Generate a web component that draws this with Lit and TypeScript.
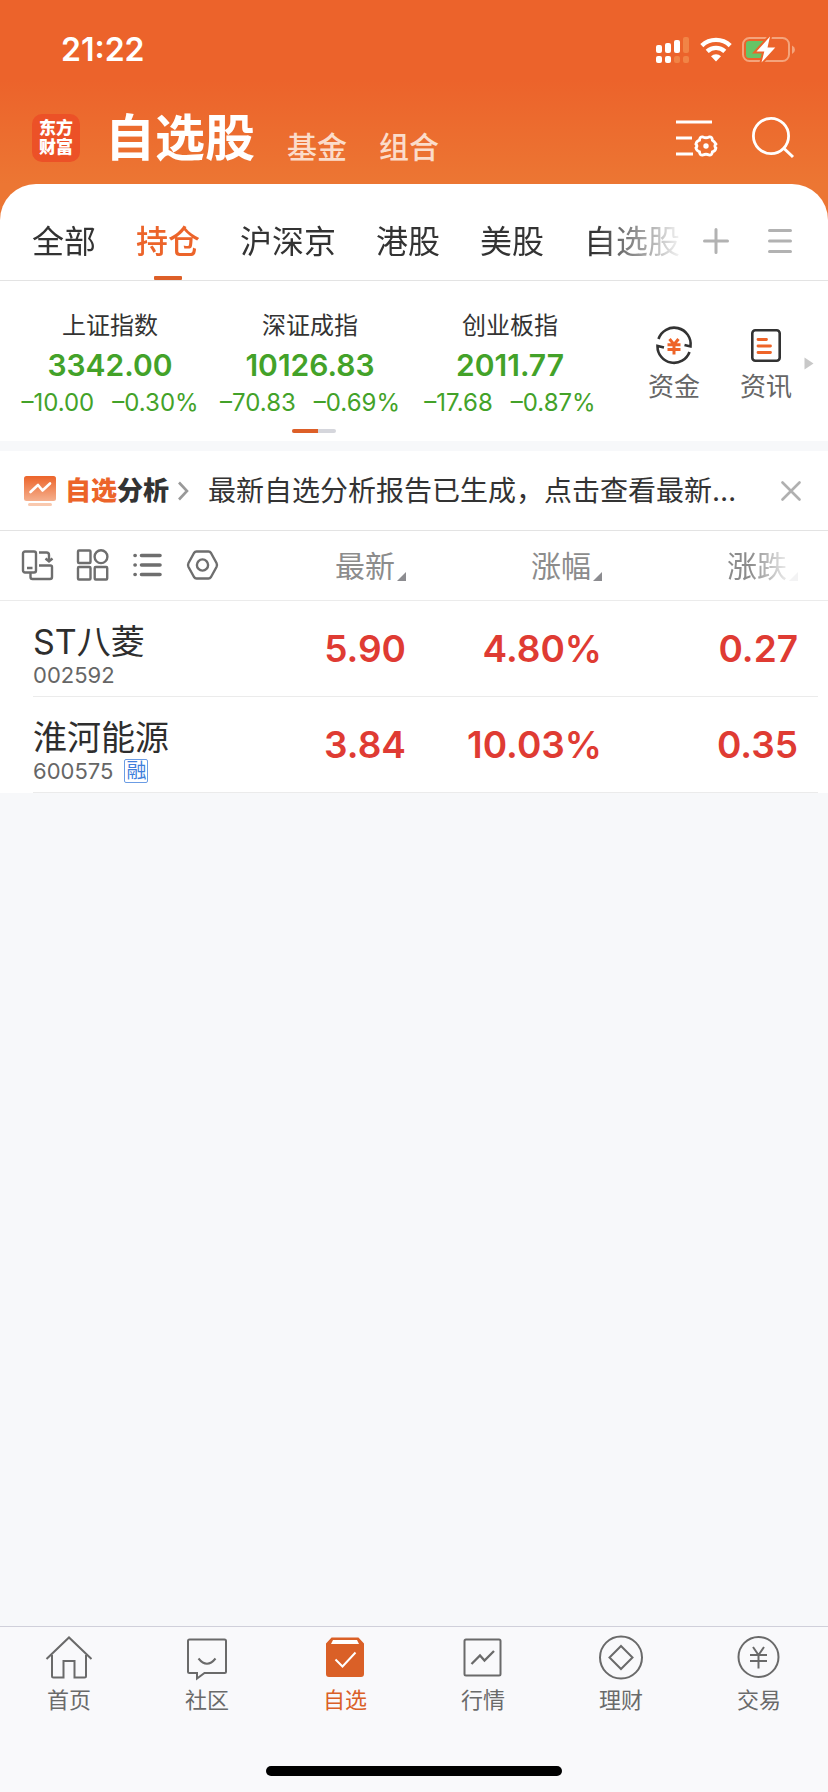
import { LitElement, html, css, svg } from "lit";
import { customElement, property, state } from "lit/decorators.js";
import { classMap } from "lit/directives/class-map.js";

const reset = css`
  :host, * { box-sizing: border-box; }
  button {
    appearance: none;
    border: 0;
    padding: 0;
    margin: 0;
    background: none;
    font: inherit;
    color: inherit;
    cursor: pointer;
  }
  a { color: inherit; text-decoration: none; }
  svg { display: block; flex: none; fill: none; }
  h1, p { margin: 0; }
`;

@customElement("status-bar")
class StatusBar extends LitElement {
  static styles = [reset, css`
    :host {
      display: flex;
      justify-content: space-between;
      align-items: center;
      height: 100px;
      padding: 0 32px 0 61px;
      color: #fff;
    }
    .time { font-size: 32px; line-height: 40px; font-weight: 600; }
    .icons { display: flex; align-items: center; gap: 10px; }
  `];

  render() {
    return html`
      <time class="time">21:22</time>
      <div class="icons">
        <svg width="34" height="28" viewBox="0 0 34 28" aria-label="信号">
          <rect x="0" y="9" width="6" height="8" rx="2" fill="#fff"/>
          <rect x="9" y="7" width="6" height="10" rx="2" fill="#fff"/>
          <rect x="18" y="4" width="6" height="13" rx="2" fill="#fff"/>
          <rect x="27" y="1" width="6" height="16" rx="2" fill="#f18446"/>
          <rect x="0" y="20" width="6" height="7" rx="2" fill="#fff"/>
          <rect x="9" y="20" width="6" height="7" rx="2" fill="#fff"/>
          <rect x="18" y="20" width="6" height="7" rx="2" fill="#f18446"/>
          <rect x="27" y="20" width="6" height="7" rx="2" fill="#f18446"/>
        </svg>
        <svg width="32" height="26" viewBox="0 0 32 26" aria-label="无线网络">
          <path d="M1.800 8.600A20.600 20.600 0 0 1 30.200 8.600" stroke="#fff" stroke-width="4.400"/>
          <path d="M7.200 14.400A12.800 12.800 0 0 1 24.800 14.400" stroke="#fff" stroke-width="4.400"/>
          <path d="M11 19.200A7.400 7.400 0 0 1 21 19.200L16 24.400Z" fill="#fff"/>
        </svg>
        <svg width="54" height="28" viewBox="0 0 54 28" aria-label="电池充电中">
          <rect x="1" y="2" width="46" height="23" rx="6.500" stroke="#f4a47c" stroke-width="2"/>
          <path d="M50 9.500Q53 11 53 13.700Q53 16.500 50 18Z" fill="#f4a47c"/>
          <path d="M7 5H21V22H7Q4 22 4 19V8Q4 5 7 5Z" fill="#67c466"/>
          <path d="M28 0.500L14.500 15.500H22.300L19.500 26.500L33.300 11.500H25.500Z" fill="#fff" stroke="#ec642b" stroke-width="4" paint-order="stroke"/>
        </svg>
      </div>
    `;
  }
}

@customElement("app-header")
class AppHeader extends LitElement {
  static styles = [reset, css`
    :host {
      display: flex;
      align-items: center;
      height: 84px;
      padding: 0 33px 8px 32px;
      color: #fff;
    }
    .logo {
      display: grid;
      place-content: center;
      width: 48px;
      height: 48px;
      border-radius: 10px;
      background: #ec5127;
      font-size: 17px;
      line-height: 19px;
      font-weight: 900;
      text-align: center;
    }
    .titles { display: flex; align-items: flex-end; flex: 1; margin-left: 25px; }
    h1 { font-size: 50px; line-height: 60px; font-weight: 700; }
    .link { font-size: 30px; line-height: 42px; font-weight: 500; color: #fbdcca; margin-left: 32px; }
    .actions { display: flex; align-items: center; gap: 34px; }
  `];

  render() {
    return html`
      <a class="logo" href="#home"><span>东方</span><span>财富</span></a>
      <div class="titles">
        <h1>自选股</h1>
        <a class="link" href="#fund">基金</a>
        <a class="link" href="#portfolio">组合</a>
      </div>
      <div class="actions">
        <button aria-label="管理">
          <svg width="43" height="42" viewBox="0 0 43 42" stroke="#fff">
            <path d="M1 5H37M1 21H17M1 37H18" stroke-width="3"/>
            <path d="M27.900 20Q31 21.500 34.100 20Q37.200 19.500 37.400 23.200Q39.200 24.200 40.900 27Q38.900 29 40.900 31Q40.500 34 37.400 34.800Q36.900 38.500 34.100 38Q31 36.500 27.900 38Q24.700 38.500 24.500 34.800Q21.700 34 20.900 31Q22.900 29 20.900 27Q21.700 24 24.500 23.200Q24.700 19.500 27.900 20Z" stroke-width="2.800"/>
            <circle cx="31" cy="29" r="2.700" fill="#fff" stroke="none"/>
          </svg>
        </button>
        <button aria-label="搜索">
          <svg width="43" height="42" viewBox="0 0 43 42" stroke="#fff" stroke-width="2.800">
            <circle cx="19" cy="19" r="17.600"/>
            <path d="M31.500 31L41 40" stroke-width="3"/>
          </svg>
        </button>
      </div>
    `;
  }
}

@customElement("group-tabs")
class GroupTabs extends LitElement {
  static styles = [reset, css`
    :host {
      display: flex;
      align-items: stretch;
      height: 97px;
      border-bottom: 1px solid #e3e3e3;
      padding-right: 36px;
      color: #333;
    }
    .strip {
      display: flex;
      gap: 40px;
      flex: 1;
      min-width: 0;
      padding-left: 32px;
      -webkit-mask-image: linear-gradient(to left, transparent 0, #000 90px);
      mask-image: linear-gradient(to left, transparent 0, #000 90px);
    }
    .tab {
      position: relative;
      flex: none;
      height: 96px;
      padding-bottom: 14px;
      padding-top: 34px;
      font-size: 32px;
      line-height: 48px;
      white-space: nowrap;
    }
    .active { color: #ec642a; font-weight: 500; }
    .active::after {
      content: "";
      position: absolute;
      left: 50%;
      bottom: 0;
      width: 28px;
      height: 4px;
      margin-left: -14px;
      border-radius: 1px;
      background: #dd5f28;
    }
    .tools { display: flex; align-items: center; gap: 39px; padding: 18px 0 0 18px; }
  `];

  @state() private current = "持仓";

  render() {
    return html`
      <nav class="strip">
        ${["全部", "持仓", "沪深京", "港股", "美股", "自选股"].map((name) => html`
          <button class=${classMap({ tab: true, active: name === this.current })}
            @click=${() => { this.current = name; }}>${name}</button>`)}
      </nav>
      <div class="tools">
        <button aria-label="添加分组">
          <svg width="26" height="26" viewBox="0 0 26 26" stroke="#b2b2b2" stroke-width="3" stroke-linecap="round">
            <path d="M13 1.500V24.500M1.500 13H24.500"/>
          </svg>
        </button>
        <button aria-label="分组列表">
          <svg width="24" height="26" viewBox="0 0 24 26" stroke="#b2b2b2" stroke-width="3" stroke-linecap="round">
            <path d="M1.500 2.500H22.500M1.500 13H22.500M1.500 23.500H22.500"/>
          </svg>
        </button>
      </div>
    `;
  }
}

interface Quote { name: string; value: string; change: string; percent: string; }

const QUOTES: Quote[] = [
  { name: "上证指数", value: "3342.00", change: "–10.00", percent: "–0.30%" },
  { name: "深证成指", value: "10126.83", change: "–70.83", percent: "–0.69%" },
  { name: "创业板指", value: "2011.77", change: "–17.68", percent: "–0.87%" },
];

@customElement("index-panel")
class IndexPanel extends LitElement {
  static styles = [reset, css`
    :host {
      display: flex;
      gap: 10px;
      height: 160px;
      padding: 0 14px 0 10px;
      color: #333;
    }
    .pager { flex: 1; display: flex; flex-direction: column; align-items: center; }
    .quotes { display: grid; grid-template-columns: repeat(3, 1fr); width: 100%; padding: 27px 8px 0 0; }
    .quote { display: flex; flex-direction: column; align-items: center; white-space: nowrap; }
    .name { font-size: 24px; line-height: 36px; }
    .value { font-size: 30px; line-height: 42px; font-weight: 600; color: #43a229; }
    .moves { display: flex; gap: 18px; font-size: 24px; line-height: 34px; color: #43a229; }
    .dots { display: flex; width: 44px; height: 4px; margin-top: 9px; border-radius: 2px; overflow: hidden; background: #d5d6dc; }
    .dots i { width: 26px; background: #dd5f28; }
    .shortcuts { display: flex; align-items: flex-start; padding-top: 44px; }
    .shortcut { display: flex; flex-direction: column; align-items: center; gap: 4px; width: 92px; font-size: 26px; line-height: 36px; color: #666; }
    .more { width: 10px; height: 13px; margin: 32px 0 0 -8px; }
  `];

  render() {
    return html`
      <div class="pager">
        <div class="quotes">
          ${QUOTES.map((q) => html`
            <a class="quote" href="#index">
              <span class="name">${q.name}</span>
              <span class="value">${q.value}</span>
              <span class="moves"><span>${q.change}</span><span>${q.percent}</span></span>
            </a>`)}
        </div>
        <div class="dots"><i></i></div>
      </div>
      <div class="shortcuts">
        <a class="shortcut" href="#money">
          <svg width="40" height="40" viewBox="0 0 40 40" stroke="#333" stroke-width="2.600">
            <path d="M4.500 14A16.500 16.500 0 0 1 36.500 21.500L30.500 20"/>
            <path d="M35.500 27A16.500 16.500 0 0 1 3.500 21L10 22.500" />
            <path d="M15.500 14L20 19.500L24.500 14M13.500 19.700H26.500M13.500 24.500H26.500M20 19.500V29.500" stroke="#ee6428" stroke-width="3"/>
          </svg>
          <span>资金</span>
        </a>
        <a class="shortcut" href="#news">
          <svg width="40" height="40" viewBox="0 0 40 40">
            <rect x="6.300" y="5.300" width="27.400" height="30.400" rx="3" stroke="#333" stroke-width="2.600"/>
            <path d="M12 14.500H20.500M12 21H24.500M12 27.500H24.500" stroke="#ee6428" stroke-width="2.800" stroke-linecap="round"/>
          </svg>
          <span>资讯</span>
        </a>
        <svg class="more" viewBox="0 0 10 13"><path d="M0.500 0.500L9.500 6.500L0.500 12.500Z" fill="#c8c8c8"/></svg>
      </div>
    `;
  }
}

@customElement("analysis-bar")
class AnalysisBar extends LitElement {
  static styles = [reset, css`
    :host {
      display: flex;
      align-items: center;
      height: 90px;
      padding: 0 27px 0 24px;
      border-top: 10px solid #f7f8fa;
      border-bottom: 1px solid #e3e3e3;
      color: #333;
    }
    .brand { display: flex; align-items: center; gap: 9px; font-size: 26px; line-height: 36px; font-weight: 900; }
    .brand em { font-style: normal; color: #ec642a; }
    .message {
      flex: 1;
      min-width: 0;
      margin: 0 30px 0 19px;
      overflow: hidden;
      text-overflow: ellipsis;
      white-space: nowrap;
      font-size: 28px;
      line-height: 40px;
    }
  `];

  render() {
    return html`
      <a class="brand" href="#analysis">
        <svg width="32" height="32" viewBox="0 0 32 32">
          <defs>
            <linearGradient id="fill" x1="0" y1="0" x2="0" y2="1">
              <stop offset="0" stop-color="#ec642a"/>
              <stop offset="1" stop-color="#f5b08e"/>
            </linearGradient>
          </defs>
          <rect x="0" y="1" width="32" height="25" rx="2.500" fill="url(#fill)"/>
          <path d="M6.500 17L14 10L18.500 15.500L26 8.500" stroke="#fff" stroke-width="2.600" stroke-linecap="round" stroke-linejoin="round"/>
          <rect x="4" y="28" width="24" height="3" rx="1.500" fill="#f9c9ae"/>
        </svg>
        <span><em>自选</em>分析</span>
        <svg width="11" height="20" viewBox="0 0 11 20" stroke="#999" stroke-width="2.600"><path d="M1 1.500L9 10L1 18.500"/></svg>
      </a>
      <p class="message">最新自选分析报告已生成，点击查看最新…</p>
      <button aria-label="关闭">
        <svg width="20" height="20" viewBox="0 0 20 20" stroke="#b0b0b0" stroke-width="2.600" stroke-linecap="round"><path d="M1.500 1.500L18.500 18.500M18.500 1.500L1.500 18.500"/></svg>
      </button>
    `;
  }
}

interface Stock { name: string; code: string; margin: boolean; price: string; percent: string; change: string; }

const STOCKS: Stock[] = [
  { name: "ST八菱", code: "002592", margin: false, price: "5.90", percent: "4.80%", change: "0.27" },
  { name: "淮河能源", code: "600575", margin: true, price: "3.84", percent: "10.03%", change: "0.35" },
];

@customElement("stock-table")
class StockTable extends LitElement {
  static styles = [reset, css`
    :host { display: block; background: #fff; color: #333; }
    table { width: 100%; table-layout: fixed; border-collapse: separate; border-spacing: 0; }
    th, td { padding: 0; font-weight: 400; text-align: right; vertical-align: top; }
    .c-price { width: 166px; }
    .c-percent { width: 196px; }
    .c-change { width: 226px; }
    th { height: 70px; border-bottom: 1px solid #ebebeb; vertical-align: middle; }
    .views { display: flex; gap: 22px; padding-left: 21px; }
    .sort { display: inline-flex; align-items: flex-end; gap: 2px; font-size: 30px; line-height: 44px; color: #8c8c8c; }
    .sort svg { margin-bottom: 7px; }
    .fade {
      -webkit-mask-image: linear-gradient(to left, rgba(0, 0, 0, 0.1) 8px, #000 48px);
      mask-image: linear-gradient(to left, rgba(0, 0, 0, 0.1) 8px, #000 48px);
    }
    .last { padding-right: 30px; }
    .cell { height: 96px; border-bottom: 1px solid #ebebeb; }
    .first { padding-left: 33px; text-align: left; }
    .id { padding-top: 20px; }
    .name { display: block; font-size: 34px; line-height: 42px; white-space: nowrap; color: #2e2e2e; }
    .code { display: flex; align-items: center; gap: 11px; font-size: 22px; line-height: 24px; color: #666; }
    .badge { display: grid; place-items: center; width: 24px; height: 24px; border: 1px solid #6b9ce4; border-radius: 2px; font-size: 20px; line-height: 22px; color: #3f7fdc; }
    .num { font-size: 37px; line-height: 95px; font-weight: 600; color: #df3b33; }
    .end { padding-right: 10px; }
    .end .num { padding-right: 20px; }
  `];

  private head(label: string, fade = false) {
    return html`
      <button class=${classMap({ sort: true, fade })}>
        ${label}
        <svg width="9" height="9" viewBox="0 0 9 9"><path d="M9 0V9H0Z" fill="#8c8c90"/></svg>
      </button>`;
  }

  render() {
    return html`
      <table>
        <colgroup><col><col class="c-price"><col class="c-percent"><col class="c-change"></colgroup>
        <thead>
          <tr>
            <th>
              <div class="views">
                <button aria-label="切换横屏">
                  <svg width="33" height="33" viewBox="0 0 33 33" stroke="#6e6e6e" stroke-width="2.400">
                    <rect x="2" y="2.500" width="13" height="21" rx="2"/>
                    <path d="M6 19H11.500M18 3.500H25.500Q28 3.500 28 6V11.500M24.500 9.500L28 12.500L31.500 9.500M18 16.500H29.500Q31 16.500 31 18V28Q31 30 29 30H11.500Q9.500 30 9.500 28V24"/>
                  </svg>
                </button>
                <button aria-label="宫格视图">
                  <svg width="33" height="33" viewBox="0 0 33 33" stroke="#6e6e6e" stroke-width="2.400">
                    <rect x="2" y="1.500" width="12.500" height="12.500" rx="1"/>
                    <circle cx="25" cy="7.700" r="6.400"/>
                    <rect x="2" y="18" width="12.500" height="12.500" rx="1"/>
                    <rect x="18.700" y="18" width="12.500" height="12.500" rx="1"/>
                  </svg>
                </button>
                <button aria-label="列表视图">
                  <svg width="33" height="33" viewBox="0 0 33 33" stroke="#6e6e6e" stroke-width="3.600" stroke-linecap="round">
                    <path d="M4 6.500H4.200M4 16H4.200M4 25.500H4.200M10.500 6.500H29M10.500 16H29M10.500 25.500H29"/>
                  </svg>
                </button>
                <button aria-label="设置">
                  <svg width="33" height="33" viewBox="-1 0 33 33" stroke="#6e6e6e" stroke-width="2.400" stroke-linejoin="round">
                    <path d="M9.500 2.500H21.500Q23 2.500 24 4L29.500 14Q30.500 16 29.500 18L24 28Q23 29.500 21.500 29.500H9.500Q8 29.500 7 28L1.500 18Q0.500 16 1.500 14L7 4Q8 2.500 9.500 2.500Z"/>
                    <circle cx="15.500" cy="16" r="5.600"/>
                  </svg>
                </button>
              </div>
            </th>
            <th>${this.head("最新")}</th>
            <th>${this.head("涨幅")}</th>
            <th class="last">${this.head("涨跌", true)}</th>
          </tr>
        </thead>
        <tbody>
          ${STOCKS.map((s) => html`
            <tr>
              <td class="first">
                <div class="cell id">
                  <span class="name">${s.name}</span>
                  <span class="code">${s.code}${s.margin ? html`<span class="badge">融</span>` : ""}</span>
                </div>
              </td>
              <td><div class="cell num">${s.price}</div></td>
              <td><div class="cell num">${s.percent}</div></td>
              <td class="end"><div class="cell num">${s.change}</div></td>
            </tr>`)}
        </tbody>
      </table>
    `;
  }
}

const NAV = [
  { label: "首页", icon: svg`<path d="M1.500 24L24 2.500L46.500 24M7 20V41Q7 42.500 8.500 42.500H18.500V26H29.500V42.500H39.500Q41 42.500 41 41V20"/>` },
  { label: "社区", icon: svg`<path d="M6.500 4.500H41.500Q43 4.500 43 6V36.500Q43 38 41.500 38H21.500L14 43.500V38H6.500Q5 38 5 36.500V6Q5 4.500 6.500 4.500Z"/><path d="M15.500 23.500Q24 34 32.500 23.500"/>` },
  { label: "自选", icon: svg`<path d="M11 3.500H37L42 9V39Q42 41 40 41H8Q6 41 6 39V9Z" fill="#da6027" stroke="#da6027"/><path d="M12 5H36L38 9H10Z" fill="#fff" stroke="none"/><path d="M14.500 24.500L21.500 31.500L34.500 17.500" stroke="#fff"/>` },
  { label: "行情", icon: svg`<rect x="5.500" y="4.500" width="36" height="36" rx="1.500"/><path d="M12.500 29L21 20.500L25.500 25.500L35 16" stroke-width="2.300"/>` },
  { label: "理财", icon: svg`<circle cx="24" cy="22.500" r="21"/><path d="M24 11L35.500 22.500L24 34L12.500 22.500Z"/>` },
  { label: "交易", icon: svg`<circle cx="23.500" cy="22" r="20"/><path d="M18 12L23.500 20L29 12M15 20H32M15 26H32M23.500 20V33.500"/>` },
];

@customElement("bottom-nav")
class BottomNav extends LitElement {
  static styles = [reset, css`
    :host { display: flex; flex-direction: column; align-items: center; border-top: 1px solid #d0d0da; background: #f9f9fb; }
    nav { display: grid; grid-template-columns: repeat(6, 1fr); width: 100%; padding-top: 8px; }
    a { display: flex; flex-direction: column; align-items: center; gap: 3px; font-size: 22px; line-height: 32px; color: #6a6a6a; }
    a svg { stroke: #6a6a6a; }
    .active { color: #da6027; }
    .bar { width: 296px; height: 10px; margin: 50px 0 16px; border-radius: 5px; background: #000; }
  `];

  @property() current = "自选";

  render() {
    return html`
      <nav>
        ${NAV.map((n) => html`
          <a href="#tab" class=${classMap({ active: n.label === this.current })}>
            <svg width="48" height="46" viewBox="0 0 48 46" stroke-width="2">${n.icon}</svg>
            <span>${n.label}</span>
          </a>`)}
      </nav>
      <div class="bar"></div>
    `;
  }
}

@customElement("app-root")
class AppRoot extends LitElement {
  static styles = css`
    :host {
      display: flex;
      flex-direction: column;
      min-height: 100vh;
      background: #f7f8fa;
      font-family: Inter, "Noto Sans CJK SC", sans-serif;
    }
    .top { background: linear-gradient(#ec632b 80px, #ec7633 184px); padding-bottom: 40px; }
    main { flex: 1; margin-top: -40px; }
    .sheet { background: #fff; border-radius: 36px 36px 0 0; }
  `;

  render() {
    return html`
      <div class="top">
        <status-bar></status-bar>
        <app-header></app-header>
      </div>
      <main>
        <div class="sheet">
          <group-tabs></group-tabs>
          <index-panel></index-panel>
          <analysis-bar></analysis-bar>
        </div>
        <stock-table></stock-table>
      </main>
      <bottom-nav></bottom-nav>
    `;
  }
}
